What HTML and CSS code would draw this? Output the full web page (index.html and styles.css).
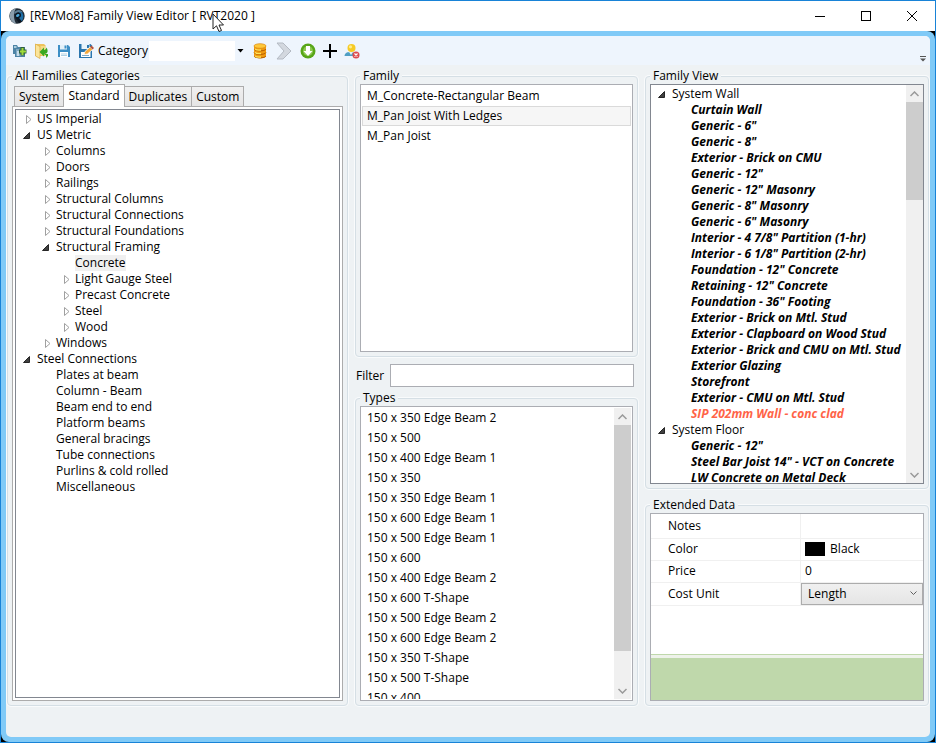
FILE: index.html
```html
<!DOCTYPE html>
<html lang="en">
<head>
    <meta charset="UTF-8">
    <meta name="viewport" content="width=device-width, initial-scale=1.0">
    <title>[REVMo8] Family View Editor [ RVT2020 ]</title>
    <link rel="stylesheet" href="styles.css">
</head>
<body>

<div class="window">
    <header class="titlebar">
        <svg class="app-icon" width="16" height="16" viewBox="0 0 16 16">
            <circle cx="8" cy="8" r="7.700" fill="#1f2a35"/>
            <path d="M3.500 14C-1 10 0 2 7 0.500C4.500 4 4 10 7 15.500C5.500 15.500 4.500 15 3.500 14Z" fill="#8b9dab"/>
            <path d="M10 3C15 4 15.500 10 12.500 13.500L9 9Z" fill="#1d6fa8"/>
            <path d="M5 5C7 1 12 1 14 4.500C11 3 8 4 7 7Z" fill="#5f7f95"/>
            <path d="M6 6C8 4 12 4 12 7C12 9 11 9.500 10 10L13 13.500L10 15L6.500 10Z" fill="#0b1622"/>
            <path d="M7 7.500C8 5.500 10.500 5.500 10.500 7C10.500 8.500 9 9 7.500 9Z" fill="#4aa6d8"/>
        </svg>
        <h1 class="title">[REVMo8] Family View Editor [ RVT2020 ]</h1>
        <div class="window-buttons">
            <button type="button" aria-label="Minimize"><svg width="10" height="10" viewBox="0 0 10 10"><path d="M0 5.500H10" stroke="#000"/></svg></button>
            <button type="button" aria-label="Maximize"><svg width="10" height="10" viewBox="0 0 10 10"><rect x="0.500" y="0.500" width="9" height="9" fill="none" stroke="#000"/></svg></button>
            <button type="button" aria-label="Close"><svg width="10" height="10" viewBox="0 0 10 10"><path d="M0 0L10 10M10 0L0 10" stroke="#000"/></svg></button>
        </div>
    </header>

    <div class="frame">
        <main class="client">
            <div class="toolbar">
                <button type="button" class="tool" aria-label="Add family">
                    <svg width="16" height="16" viewBox="0 0 16 16">
                        <path d="M1 2H5L6 4H13V14H3V11H1Z" fill="#4d84a6"/>
                        <path d="M2 3H4.500V5H2Z" fill="#a9cbdd"/>
                        <path d="M4 6H12V13H4Z" fill="#7fa9c4"/>
                        <path d="M5 8H7V13H5Z" fill="#c6dce9"/>
                        <path d="M10.500 4V12.500M7 8.500H14.500" stroke="#2d5e3c" stroke-width="4"/>
                        <path d="M10.500 5V12M8 8.500H14" stroke="#9fdc3a" stroke-width="2"/>
                    </svg>
                </button>
                <button type="button" class="tool" aria-label="Open folder">
                    <svg width="16" height="16" viewBox="0 0 16 16">
                        <path d="M1.500 1H10L11.500 2.500V13H1.500Z" fill="#eec35c"/>
                        <path d="M1.500 1L6 3.500V15.500L1.500 13Z" fill="#fbe59b" stroke="#dcae4a" stroke-width="0.800"/>
                        <path d="M6.500 3H11V12H6.500Z" fill="#f6dc86"/>
                        <path d="M5.500 9L10 4.500V7C11.500 7 12 6 12.500 4.500C14.500 8 14 11 10 11V13.500Z" fill="#39a822"/>
                        <path d="M11 11H14V13L12 15V12H10Z" fill="#39a822"/>
                    </svg>
                </button>
                <button type="button" class="tool" aria-label="Save">
                    <svg width="16" height="16" viewBox="0 0 16 16">
                        <path d="M2 2H12L14 4V14H2Z" fill="#3d8fc6"/>
                        <path d="M4 2H11V6.500H4Z" fill="#e4f1f9"/>
                        <path d="M8.500 2.500H10.500V5.500H8.500Z" fill="#3d8fc6"/>
                        <path d="M4 9H12V14H4Z" fill="#fff"/>
                        <path d="M5 11H11M5 12.500H11" stroke="#9cc5de" stroke-width="0.800"/>
                    </svg>
                </button>
                <button type="button" class="tool" aria-label="Save as">
                    <svg width="16" height="16" viewBox="0 0 16 16">
                        <path d="M1 1H12.500L14 2.500V15H1Z" fill="#2b76ae"/>
                        <path d="M3.500 1H11.500V6H3.500Z" fill="#e9f4fb"/>
                        <path d="M9 2H11V5H9Z" fill="#2b76ae"/>
                        <path d="M3 9H12.500V14H3Z" fill="#fff"/>
                        <path d="M4 12.500H11" stroke="#7fa9c6"/>
                        <path d="M6 11.500L7 8.500L12 4L14.500 6.500L9.500 11Z" fill="#f5a83a" stroke="#fff" stroke-width="0.800"/>
                        <path d="M12 4L13.500 2.500L16 5L14.500 6.500Z" fill="#b5523a"/>
                    </svg>
                </button>
                <label class="category-label" for="category">Category</label>
                <div class="combo">
                    <input type="text" id="category">
                    <button type="button" aria-label="Show categories"><svg width="7" height="4" viewBox="0 0 7 4"><path d="M0.500 0H6.500L3.500 3.500Z" fill="#000"/></svg></button>
                </div>
                <button type="button" class="tool" aria-label="Database">
                    <svg width="16" height="16" viewBox="0 0 16 16">
                        <path d="M2 3V13C2 16 14 16 14 13V3Z" fill="#f09a10"/>
                        <path d="M2 6C3 8.500 13 8.500 14 6M2 9.500C3 12 13 12 14 9.500M2 13C3 15.500 13 15.500 14 13" fill="none" stroke="#b35c00"/>
                        <path d="M3 5.800C4 7 7 7.200 9 7M3 9.300C4 10.500 7 10.700 9 10.500M3 12.800C4 14 7 14.200 9 14" fill="none" stroke="#ffe45c" stroke-width="1.300"/>
                        <ellipse cx="8" cy="3" rx="6" ry="2.300" fill="#ffc83a" stroke="#d98a14" stroke-width="0.700"/>
                    </svg>
                </button>
                <button type="button" class="tool tool-wide" aria-label="Next">
                    <svg width="16" height="18" viewBox="0 0 16 18">
                        <path d="M1 1H7L15 9L7 17H1L8 9Z" fill="#d3d8df" stroke="#b4bac3"/>
                    </svg>
                </button>
                <button type="button" class="tool" aria-label="Download">
                    <svg width="16" height="16" viewBox="0 0 16 16">
                        <circle cx="8" cy="8" r="7.500" fill="#58a618"/>
                        <circle cx="8" cy="8" r="5" fill="#8cc850"/>
                        <path d="M6 3H10V8H12.500L8 13L3.500 8H6Z" fill="#fff"/>
                    </svg>
                </button>
                <button type="button" class="tool" aria-label="Add">
                    <svg width="16" height="16" viewBox="0 0 16 16"><path d="M8 1V15M1 8H15" stroke="#000" stroke-width="2"/></svg>
                </button>
                <button type="button" class="tool" aria-label="Remove user">
                    <svg width="16" height="16" viewBox="0 0 16 16">
                        <path d="M0.500 13C1 9.500 3 9 7 9C10 9 11 10 11 13Z" fill="#4f9fc4"/>
                        <path d="M5 9L7 12L9 9Z" fill="#e6f2f8"/>
                        <circle cx="7.500" cy="5" r="4" fill="#f6cb25"/>
                        <circle cx="6.500" cy="3.800" r="1.600" fill="#ffec8c"/>
                        <circle cx="12" cy="12" r="3.500" fill="#dc4a4f"/>
                        <path d="M10.500 10.500L13.500 13.500M13.500 10.500L10.500 13.500" stroke="#fff" stroke-width="1.200"/>
                    </svg>
                </button>
                <button type="button" class="overflow" aria-label="More tools"><svg width="6" height="6" viewBox="0 0 6 6"><path d="M0 0.500H6" stroke="#555"/><path d="M0 2.500H6L3 5.500Z" fill="#555"/></svg></button>
            </div>

            <div class="columns">
                <fieldset class="group">
                    <legend>All Families Categories</legend>
                    <div class="tabs" role="tablist">
                        <button type="button" class="tab" role="tab">System</button>
                        <button type="button" class="tab active" role="tab" aria-selected="true">Standard</button>
                        <button type="button" class="tab" role="tab">Duplicates</button>
                        <button type="button" class="tab" role="tab">Custom</button>
                    </div>
                    <div class="tab-panel">
                        <ul class="tree box" id="categories"></ul>
                    </div>
                </fieldset>

                <div class="column">
                    <fieldset class="group family">
                        <legend>Family</legend>
                        <ul class="list box light">
                            <li>M_Concrete-Rectangular Beam</li>
                            <li class="selected">M_Pan Joist With Ledges</li>
                            <li>M_Pan Joist</li>
                        </ul>
                    </fieldset>
                    <div class="filter">
                        <label for="filter">Filter</label>
                        <input type="text" id="filter">
                    </div>
                    <fieldset class="group types">
                        <legend>Types</legend>
                        <div class="box light scroll-box padded">
                            <ul class="list" id="types"></ul>
                            <div class="scrollbar">
                                <button type="button" aria-label="Scroll types up"><svg width="9" height="6" viewBox="0 0 9 6"><path d="M0.500 5L4.500 1L8.500 5" fill="none" stroke="#999" stroke-width="1.500"/></svg></button>
                                <div class="track"><div class="thumb types-thumb"></div></div>
                                <button type="button" aria-label="Scroll types down"><svg width="9" height="6" viewBox="0 0 9 6"><path d="M0.500 1L4.500 5L8.500 1" fill="none" stroke="#999" stroke-width="1.500"/></svg></button>
                            </div>
                        </div>
                    </fieldset>
                </div>

                <div class="column">
                    <fieldset class="group view">
                        <legend>Family View</legend>
                        <div class="box scroll-box">
                            <ul class="tree view-tree" id="familyView"></ul>
                            <div class="scrollbar">
                                <button type="button" aria-label="Scroll view up"><svg width="9" height="6" viewBox="0 0 9 6"><path d="M0.500 5L4.500 1L8.500 5" fill="none" stroke="#999" stroke-width="1.500"/></svg></button>
                                <div class="track"><div class="thumb view-thumb"></div></div>
                                <button type="button" aria-label="Scroll view down"><svg width="9" height="6" viewBox="0 0 9 6"><path d="M0.500 1L4.500 5L8.500 1" fill="none" stroke="#999" stroke-width="1.500"/></svg></button>
                            </div>
                        </div>
                    </fieldset>
                    <fieldset class="group extended">
                        <legend>Extended Data</legend>
                        <div class="box light properties">
                            <table>
                                <tr class="tall"><th scope="row">Notes</th><td></td></tr>
                                <tr><th scope="row">Color</th><td><span class="color"><span class="swatch"></span>Black</span></td></tr>
                                <tr><th scope="row">Price</th><td>0</td></tr>
                                <tr>
                                    <th scope="row"><label for="costUnit">Cost Unit</label></th>
                                    <td class="select-cell">
                                        <div class="select-wrap">
                                            <select id="costUnit"><option>Length</option></select>
                                            <svg width="7" height="5" viewBox="0 0 7 5"><path d="M0.500 0.500L3.500 3.500L6.500 0.500" fill="none" stroke="#606060"/></svg>
                                        </div>
                                    </td>
                                </tr>
                            </table>
                            <div class="description"></div>
                        </div>
                    </fieldset>
                </div>
            </div>
        </main>
    </div>
</div>

<svg class="cursor" width="13" height="20" viewBox="0 0 13 20"><path d="M1 1V16L4.500 12.800L7 18.500L9.500 17.500L7 12H11.500Z" fill="#fff" stroke="#222"/></svg>

<script src="script.js"></script>
</body>
</html>
```
FILE: styles.css
```css
* {
    box-sizing: border-box;
}

body {
    margin: 0;
    font-family: "Open Sans", "Noto Sans", sans-serif;
    font-size: 12px;
    line-height: 16px;
    color: #000;
}

button, input, select {
    font: inherit;
    color: inherit;
    margin: 0;
    padding: 0;
    border: none;
    border-radius: 0;
    background: none;
}

svg {
    display: block;
}

ul {
    list-style: none;
    margin: 0;
    padding: 0;
}

.window {
    display: flex;
    flex-direction: column;
    height: 100vh;
    border: 1px solid #1883d7;
    background: #000;
}

/* title bar */

.titlebar {
    display: flex;
    align-items: center;
    height: 30px;
    padding-left: 8px;
    background: #fff;
}

.title {
    flex: 1;
    margin: 0 0 0 5px;
    font-size: 12px;
    font-weight: normal;
}

.window-buttons {
    display: flex;
}

.window-buttons button {
    display: flex;
    align-items: center;
    justify-content: center;
    width: 46px;
    height: 30px;
}

.window-buttons button:hover {
    background: #e5e5e5;
}

.frame {
    display: flex;
    flex: 1;
    min-height: 0;
    padding: 5px;
    border-radius: 8px;
    background: #80caf7;
}

.client {
    display: flex;
    flex-direction: column;
    flex: 1;
    min-width: 0;
    overflow: hidden;
    border-radius: 5px;
    background: #eef2f4;
}

/* toolbar */

.toolbar {
    display: flex;
    align-items: center;
    height: 29px;
    padding-left: 3px;
    background: #eef5fd;
}

.tool {
    display: flex;
    align-items: center;
    justify-content: center;
    width: 22px;
    height: 22px;
}

.tool-wide {
    width: 26px;
}

.category-label {
    margin-left: 1px;
}

.combo {
    display: flex;
    width: 98px;
    height: 20px;
    margin: 0 2px 0 1px;
    background: #fff;
}

.combo input {
    flex: 1;
    min-width: 0;
}

.combo button {
    display: flex;
    align-items: center;
    justify-content: center;
    width: 12px;
    background: #eef5fd;
}

.overflow {
    align-self: flex-end;
    margin: 0 4px 3px auto;
}

/* panels */

.columns {
    display: grid;
    grid-template-columns: 341fr 283fr 284fr;
    gap: 7px;
    flex: 1;
    min-height: 0;
    padding: 3px 1px 31px;
}

.column {
    display: flex;
    flex-direction: column;
    min-width: 0;
    min-height: 0;
}

.group {
    display: flex;
    flex-direction: column;
    min-width: 0;
    min-height: 0;
    margin: 0;
    padding: 0 4px 4px;
    border: 1px solid #d5dfe5;
    border-radius: 4px;
    box-shadow: 0 0 0 1px #f9fbfc;
}

legend {
    padding: 0 3px;
    background: #eef2f4;
}

.box {
    flex: 1;
    min-height: 0;
    overflow: hidden;
    border: 1px solid #828790;
    background: #fff;
}

.light {
    border-color: #abadb3;
}

.tabs {
    display: flex;
    align-items: flex-end;
    height: 22px;
    padding-left: 2px;
}

.tab {
    height: 20px;
    margin-left: -1px;
    padding: 0 4px;
    border: 1px solid #acacac;
    border-bottom: none;
    background: linear-gradient(#f0f0f0, #e5e5e5);
}

.tab:first-child {
    margin-left: 0;
}

.tab.active {
    z-index: 1;
    height: 23px;
    margin-bottom: -1px;
    padding-bottom: 1px;
    background: #fff;
}

.tab-panel {
    display: flex;
    flex: 1;
    min-height: 0;
    padding: 2px;
    border: 1px solid #acacac;
    background: #fff;
}

/* trees */

.tree {
    padding-top: 1px;
}

.tree .row {
    display: flex;
    align-items: center;
    height: 16px;
    padding-left: 5px;
    white-space: nowrap;
}

.tree ul {
    padding-left: 19px;
}

.toggle {
    display: flex;
    align-items: center;
    justify-content: center;
    flex: none;
    width: 16px;
    height: 16px;
}

.toggle[aria-expanded="true"] {
    padding-right: 5px;
}

.tree span.selected {
    background: #f0f0f0;
}

.view-tree {
    flex: 1;
    min-width: 0;
    overflow: hidden;
}

.view-tree ul {
    font-weight: bold;
    font-style: italic;
}

.view-tree .missing {
    color: #ff6347;
}

/* lists */

.list {
    flex: 1;
    min-width: 0;
    overflow: hidden;
}

.list li {
    height: 20px;
    padding: 1px 4px;
    border: 1px solid transparent;
    white-space: nowrap;
}

.family .list {
    padding: 1px;
}

.list .selected {
    border-color: #dadada;
    background: #f6f6f6;
}

.scroll-box {
    display: flex;
}

.padded {
    padding: 1px;
}

.scrollbar {
    display: flex;
    flex-direction: column;
    flex: none;
    width: 17px;
    background: #f0f0f0;
}

.scrollbar button {
    display: flex;
    align-items: center;
    justify-content: center;
    height: 17px;
}

.track {
    flex: 1;
}

.thumb {
    background: #cdcdcd;
}

.types-thumb {
    height: 88%;
}

.view-thumb {
    height: 27%;
}

.family {
    height: 289px;
}

.filter {
    display: flex;
    align-items: center;
    gap: 6px;
    margin: 7px 4px 3px 1px;
}

.filter input {
    flex: 1;
    min-width: 0;
    height: 23px;
    padding: 0 4px;
    border: 1px solid #abadb3;
    background: #fff;
}

.types, .view {
    flex: 1;
}

/* extended data */

.extended {
    height: 209px;
    margin-top: 8px;
}

.properties {
    display: flex;
    flex-direction: column;
}

.properties table {
    width: 100%;
    table-layout: fixed;
    border-collapse: collapse;
}

.properties th {
    width: 55%;
    height: 22px;
    padding: 0 0 0 17px;
    border-right: 1px solid #f0f0f0;
    border-bottom: 1px solid #f0f0f0;
    font-weight: normal;
    text-align: left;
}

.properties .tall th {
    height: 24px;
}

.properties td {
    padding: 0 0 0 4px;
    border-bottom: 1px solid #f0f0f0;
}

.color {
    display: flex;
    align-items: center;
    gap: 5px;
}

.swatch {
    width: 20px;
    height: 14px;
    background: #000;
}

.properties .select-cell {
    padding: 0;
}

.select-wrap {
    display: flex;
    align-items: center;
    height: 22px;
    padding-right: 5px;
    border: 1px solid #acacac;
    background: linear-gradient(#f0f0f0, #e5e5e5);
}

.select-wrap select {
    flex: 1;
    padding-left: 6px;
    appearance: none;
}

.description {
    height: 46px;
    margin-top: auto;
    border-top: 1px solid #bfd8ab;
    background: linear-gradient(#eef2ea 3px, #bfd8ab 3px);
}

.cursor {
    position: absolute;
    top: 13px;
    left: 212px;
}
```
FILE: script.js
```javascript
const categories = [
    { name: "US Imperial", open: false },
    {
        name: "US Metric", open: true, items: [
            { name: "Columns", open: false },
            { name: "Doors", open: false },
            { name: "Railings", open: false },
            { name: "Structural Columns", open: false },
            { name: "Structural Connections", open: false },
            { name: "Structural Foundations", open: false },
            {
                name: "Structural Framing", open: true, items: [
                    { name: "Concrete", style: "selected" },
                    { name: "Light Gauge Steel", open: false },
                    { name: "Precast Concrete", open: false },
                    { name: "Steel", open: false },
                    { name: "Wood", open: false }
                ]
            },
            { name: "Windows", open: false }
        ]
    },
    {
        name: "Steel Connections", open: true, items: [
            { name: "Plates at beam" },
            { name: "Column - Beam" },
            { name: "Beam end to end" },
            { name: "Platform beams" },
            { name: "General bracings" },
            { name: "Tube connections" },
            { name: "Purlins & cold rolled" },
            { name: "Miscellaneous" }
        ]
    }
];

const familyView = [
    {
        name: "System Wall", open: true, items: [
            { name: "Curtain Wall" },
            { name: "Generic - 6\"" },
            { name: "Generic - 8\"" },
            { name: "Exterior - Brick on CMU" },
            { name: "Generic - 12\"" },
            { name: "Generic - 12\" Masonry" },
            { name: "Generic - 8\" Masonry" },
            { name: "Generic - 6\" Masonry" },
            { name: "Interior - 4 7/8\" Partition (1-hr)" },
            { name: "Interior - 6 1/8\" Partition (2-hr)" },
            { name: "Foundation - 12\" Concrete" },
            { name: "Retaining - 12\" Concrete" },
            { name: "Foundation - 36\" Footing" },
            { name: "Exterior - Brick on Mtl. Stud" },
            { name: "Exterior - Clapboard on Wood Stud" },
            { name: "Exterior - Brick and CMU on Mtl. Stud" },
            { name: "Exterior Glazing" },
            { name: "Storefront" },
            { name: "Exterior - CMU on Mtl. Stud" },
            { name: "SIP 202mm Wall - conc clad", style: "missing" }
        ]
    },
    {
        name: "System Floor", open: true, items: [
            { name: "Generic - 12\"" },
            { name: "Steel Bar Joist 14\" - VCT on Concrete" },
            { name: "LW Concrete on Metal Deck" }
        ]
    }
];

const types = [
    "150 x 350 Edge Beam 2", "150 x 500", "150 x 400 Edge Beam 1", "150 x 350",
    "150 x 350 Edge Beam 1", "150 x 600 Edge Beam 1", "150 x 500 Edge Beam 1",
    "150 x 600", "150 x 400 Edge Beam 2", "150 x 600 T-Shape",
    "150 x 500 Edge Beam 2", "150 x 600 Edge Beam 2", "150 x 350 T-Shape",
    "150 x 500 T-Shape", "150 x 400"
];

const closedIcon = '<svg width="6" height="9" viewBox="0 0 6 9"><path d="M0.500 0.500V8.500L5 4.500Z" fill="#fff" stroke="#a0a0a0"/></svg>';
const openIcon = '<svg width="7" height="7" viewBox="0 0 7 7"><path d="M6.500 0.500V6.500H0.500Z" fill="#404040" stroke="#262626"/></svg>';

function buildTree(list, nodes) {
    nodes.forEach(node => {
        const item = document.createElement("li");
        const row = document.createElement("div");
        row.className = "row";

        const isBranch = node.open !== undefined;
        const toggle = document.createElement(isBranch ? "button" : "span");
        toggle.className = "toggle";
        if (isBranch) {
            toggle.type = "button";
            toggle.setAttribute("aria-label", "Toggle " + node.name);
            toggle.setAttribute("aria-expanded", node.open);
            toggle.innerHTML = node.open ? openIcon : closedIcon;
        }

        const name = document.createElement("span");
        name.textContent = node.name;
        if (node.style) name.className = node.style;

        row.append(toggle, name);
        item.appendChild(row);

        if (node.items) {
            const sublist = document.createElement("ul");
            buildTree(sublist, node.items);
            item.appendChild(sublist);
            toggle.addEventListener("click", function () {
                sublist.hidden = !sublist.hidden;
                toggle.setAttribute("aria-expanded", !sublist.hidden);
                toggle.innerHTML = sublist.hidden ? closedIcon : openIcon;
            });
        }
        list.appendChild(item);
    });
}

buildTree(document.getElementById("categories"), categories);
buildTree(document.getElementById("familyView"), familyView);

types.forEach(type => {
    const item = document.createElement("li");
    item.textContent = type;
    document.getElementById("types").appendChild(item);
});
```
